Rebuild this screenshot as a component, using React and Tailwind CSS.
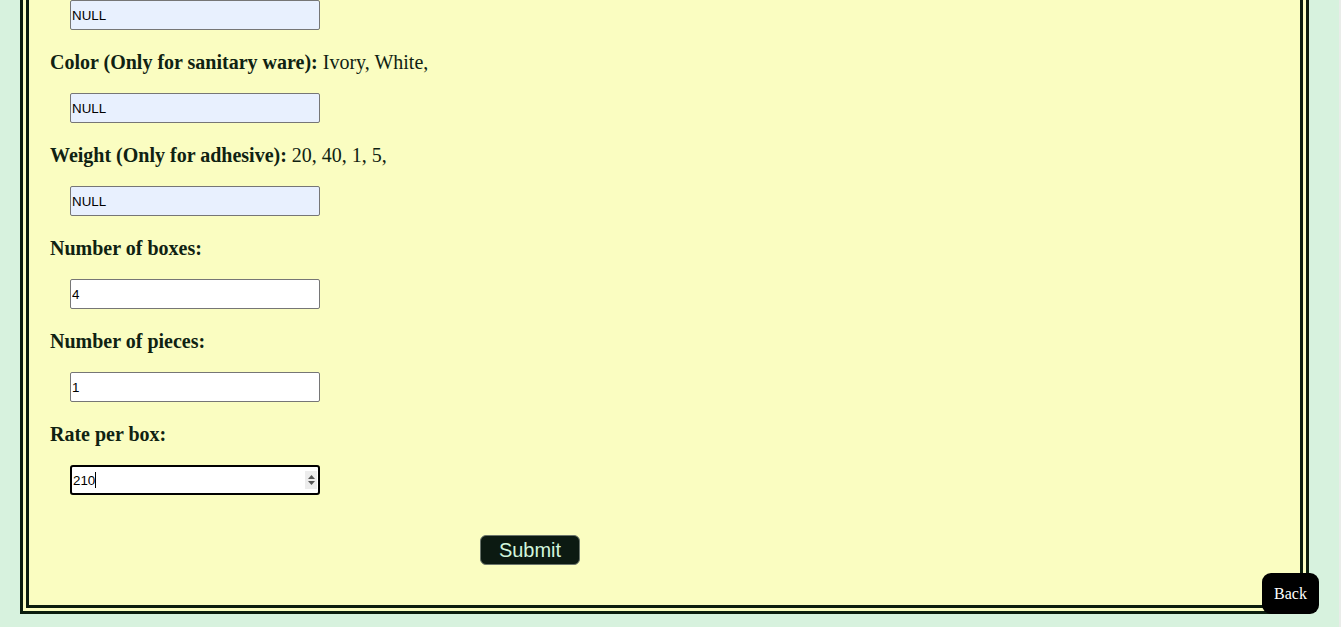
import React from 'react';

const Field = ({ value, muted, focused, spinner }) => (
  <div className="relative ml-[41px] w-[250px] h-[30px]">
    <input
      readOnly
      value={value}
      className={`w-full h-full pl-[1px] text-[13.33px] text-black outline-none rounded-[2px] [font-family:'Liberation_Sans',Arial,sans-serif]
        ${muted ? 'bg-[#e8f0fe]' : 'bg-white'}
        ${focused ? 'border-2 border-black rounded-[3px]' : 'border border-[#767676]'}`}
    />
    {focused && <span className="absolute left-[25px] top-[7px] w-[1px] h-[16px] bg-black" />}
    {spinner && (
      <div className="absolute right-[3px] top-[6px] w-[12px] h-[18px] bg-[#ececec] flex flex-col items-center justify-center gap-[2px]">
        <svg width="7" height="4" viewBox="0 0 7 4"><path d="M3.5 0L7 4H0z" fill="#555" /></svg>
        <svg width="7" height="4" viewBox="0 0 7 4"><path d="M0 0h7L3.5 4z" fill="#555" /></svg>
      </div>
    )}
  </div>
);

const Label = ({ title, value }) => (
  <p className="ml-[21px] mt-[19px] mb-[20px] h-[24px] leading-[26px] text-[20px] text-[#0f2212] [font-family:'Liberation_Serif','Times_New_Roman',serif]">
    <b>{title}</b>{value ? ` ${value}` : ''}
  </p>
);

export default function App() {
  return (
    <div className="relative w-[1341px] h-[627px] overflow-hidden bg-[#d7f2de] [font-family:'Liberation_Serif',serif]">
      <div className="absolute right-0 top-0 w-[2px] h-full bg-[#e9ece9]" />
      <div className="mt-[-9px] ml-[20px] w-[1289px] h-[623px] border-[9px] border-double border-[#0b1d0e] bg-[#fafdc1] flex flex-col">
        <Field value="NULL" muted />
        <Label title="Color (Only for sanitary ware):" value="Ivory, White," />
        <Field value="NULL" muted />
        <Label title="Weight (Only for adhesive):" value="20, 40, 1, 5," />
        <Field value="NULL" muted />
        <Label title="Number of boxes:" />
        <Field value="4" />
        <Label title="Number of pieces:" />
        <Field value="1" />
        <Label title="Rate per box:" />
        <Field value="210" focused spinner />
        <button className="mt-[40px] ml-[451px] w-[100px] h-[30px] rounded-[6px] border border-[#6b756b] bg-[#0c1a12] text-[#d2f5dc] text-[20px] leading-[28px] [font-family:'Liberation_Sans',Arial,sans-serif]">
          Submit
        </button>
      </div>
      <button className="absolute left-[1262px] top-[573px] w-[57px] h-[41px] rounded-[9px] bg-black text-white text-[16px] [font-family:'Liberation_Serif','Times_New_Roman',serif]">
        Back
      </button>
    </div>
  );
}
